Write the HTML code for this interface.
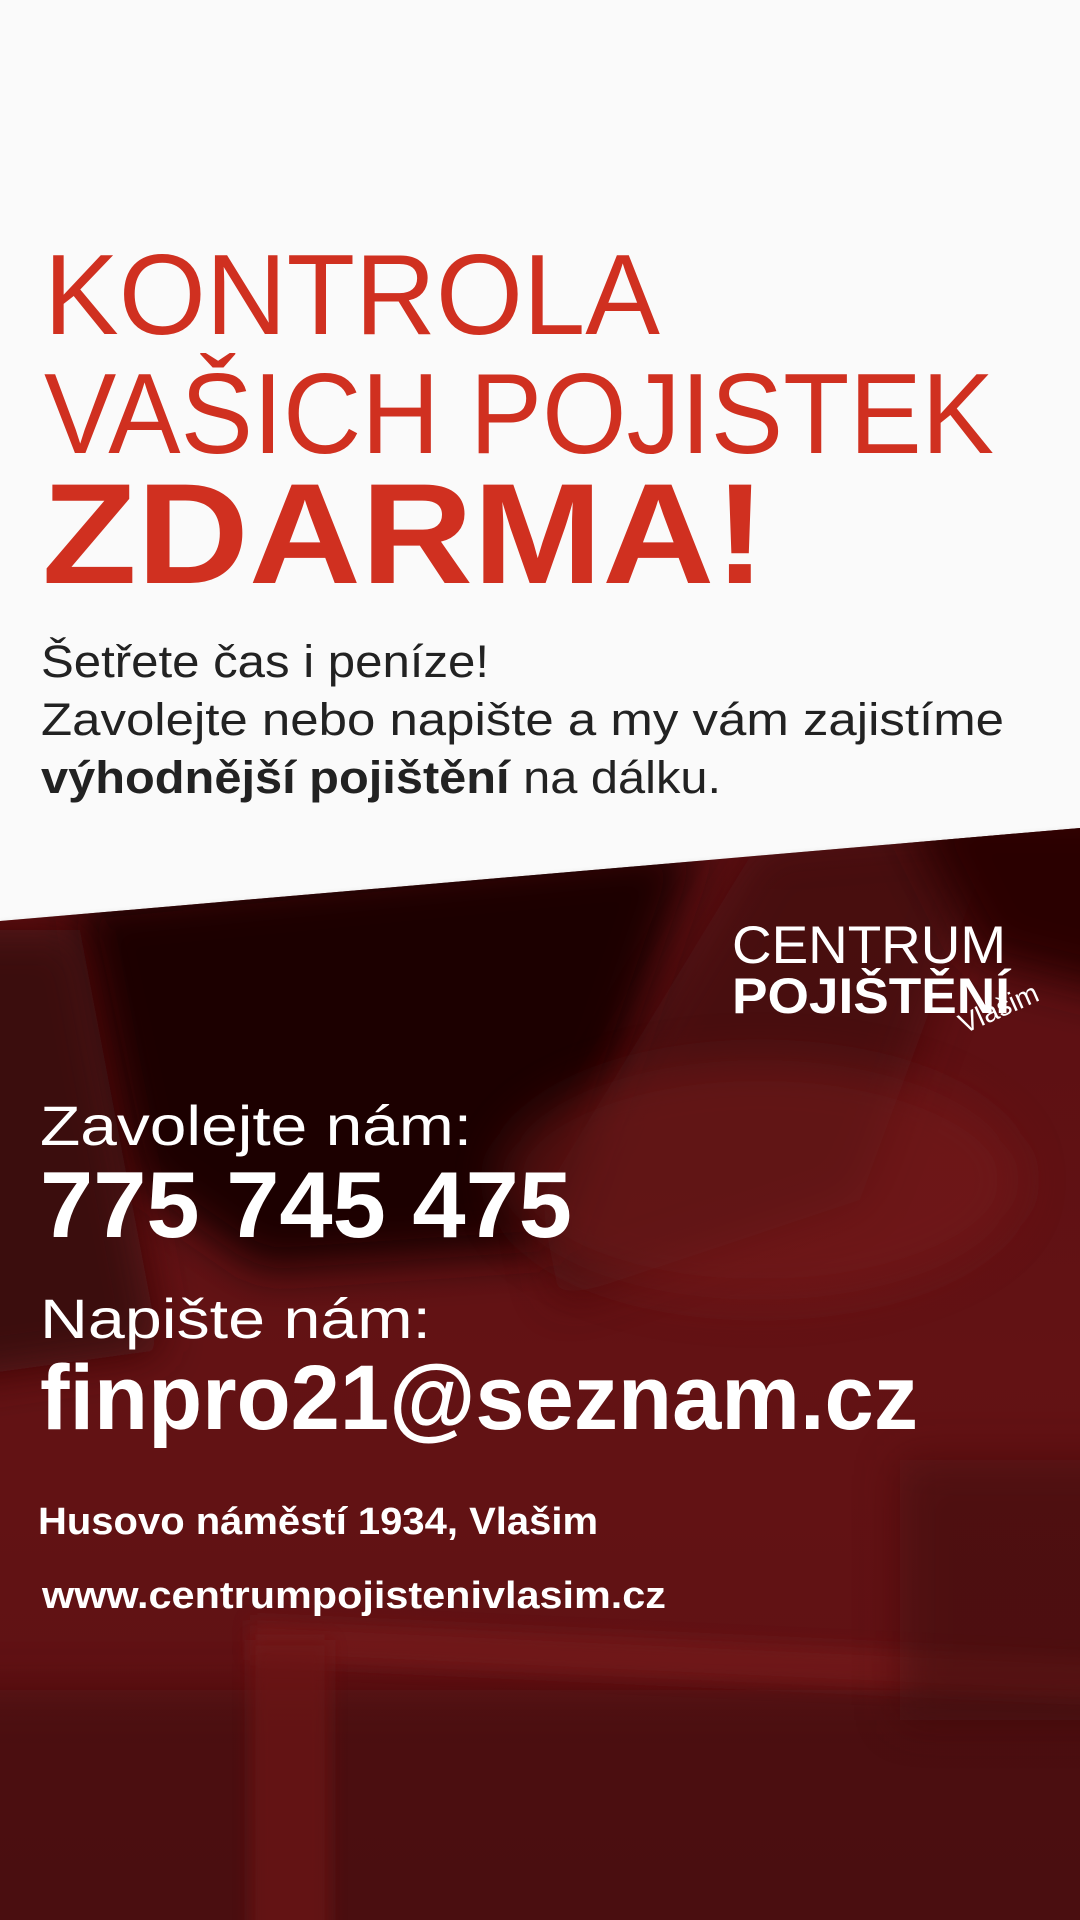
<!DOCTYPE html>
<html><head><meta charset="utf-8"><style>
html,body{margin:0;padding:0;width:1080px;height:1920px;overflow:hidden;background:#fafafa}
svg{display:block}
text{font-family:"Liberation Sans",sans-serif}
</style></head><body>
<svg width="1080" height="1920" viewBox="0 0 1080 1920" xmlns="http://www.w3.org/2000/svg">
<defs>
<linearGradient id="bg" x1="0" y1="0" x2="0" y2="1">
<stop offset="0" stop-color="#5a0f12"/>
<stop offset="0.5" stop-color="#631214"/>
<stop offset="1" stop-color="#5e1114"/>
</linearGradient>
<filter id="b1" filterUnits="userSpaceOnUse" x="-300" y="-300" width="1680" height="2520"><feGaussianBlur stdDeviation="22"/></filter>
<filter id="b2" filterUnits="userSpaceOnUse" x="-300" y="-300" width="1680" height="2520"><feGaussianBlur stdDeviation="8"/></filter>
<clipPath id="dk"><polygon points="0,921 1080,828 1080,1920 0,1920"/></clipPath>
<filter id="sh" filterUnits="userSpaceOnUse" x="-100" y="700" width="1280" height="400"><feGaussianBlur stdDeviation="4"/></filter>
</defs>
<rect width="1080" height="1920" fill="#fafafa"/>
<polygon points="0,925 1080,832 1080,840 0,933" fill="#000" opacity="0.25" filter="url(#sh)"/>
<g clip-path="url(#dk)">
<rect x="0" y="800" width="1080" height="1120" fill="url(#bg)"/>
<polygon points="70,900 700,840 560,1250 260,1270 130,1180" fill="#1a0304" filter="url(#b1)"/>
<polygon points="-60,930 80,930 160,1350 -60,1380" fill="#3a080a" filter="url(#b1)"/>
<polygon points="760,840 1000,820 860,1200 560,1300 540,1200" fill="#3a0708" opacity="0.6" filter="url(#b1)"/>
<polygon points="900,800 1140,800 1140,1000 980,960" fill="#2a0406" filter="url(#b1)"/>
<ellipse cx="760" cy="1180" rx="260" ry="120" fill="#7a1a1c" opacity="0.5" filter="url(#b1)"/>
<rect x="-100" y="1690" width="1280" height="330" fill="#3a0708" opacity="0.55" filter="url(#b1)"/>
<polygon points="250,1620 1140,1660 1140,1700 250,1660" fill="#7a1a1c" opacity="0.6" filter="url(#b2)"/>
<rect x="250" y="1640" width="80" height="380" fill="#6e1618" opacity="0.7" filter="url(#b2)"/>
<rect x="900" y="1460" width="280" height="260" fill="#3a0708" opacity="0.5" filter="url(#b1)"/>
</g>

<text x="44" y="334" font-size="114" fill="#d03020" textLength="616" lengthAdjust="spacingAndGlyphs">KONTROLA</text>
<text x="44" y="453" font-size="114" fill="#d03020" textLength="950" lengthAdjust="spacingAndGlyphs">VAŠICH POJISTEK</text>
<text x="42" y="583" font-size="143" font-weight="bold" fill="#d03020" textLength="724" lengthAdjust="spacingAndGlyphs">ZDARMA!</text>

<text x="41" y="677" font-size="45" fill="#222" textLength="448" lengthAdjust="spacingAndGlyphs">Šetřete čas i peníze!</text>
<text x="41" y="735" font-size="45" fill="#222" textLength="963" lengthAdjust="spacingAndGlyphs">Zavolejte nebo napište a my vám zajistíme</text>
<text x="41" y="793" font-size="45" fill="#222" textLength="680" lengthAdjust="spacingAndGlyphs"><tspan font-weight="bold">výhodnější pojištění</tspan> na dálku.</text>

<text x="732" y="963" font-size="53" fill="#fff" textLength="274" lengthAdjust="spacingAndGlyphs">CENTRUM</text>
<text x="732" y="1013" font-size="50" fill="#fff" font-weight="bold" textLength="278" lengthAdjust="spacingAndGlyphs">POJIŠTĚNÍ</text>
<text x="0" y="0" font-size="28" fill="#fff" transform="translate(964,1034) rotate(-24)">Vlašim</text>

<text x="40" y="1145" font-size="56" fill="#fff" textLength="432" lengthAdjust="spacingAndGlyphs">Zavolejte nám:</text>
<text x="40" y="1237" font-size="94" fill="#fff" font-weight="bold" textLength="532" lengthAdjust="spacingAndGlyphs">775 745 475</text>
<text x="40" y="1338" font-size="56" fill="#fff" textLength="391" lengthAdjust="spacingAndGlyphs">Napište nám:</text>
<text x="40" y="1429" font-size="92" fill="#fff" font-weight="bold" textLength="878" lengthAdjust="spacingAndGlyphs">finpro21@seznam.cz</text>
<text x="38" y="1534" font-size="38" fill="#fff" font-weight="bold" textLength="560" lengthAdjust="spacingAndGlyphs">Husovo náměstí 1934, Vlašim</text>
<text x="42" y="1608" font-size="38" fill="#fff" font-weight="bold" textLength="624" lengthAdjust="spacingAndGlyphs">www.centrumpojistenivlasim.cz</text>
</svg>
</body></html>
